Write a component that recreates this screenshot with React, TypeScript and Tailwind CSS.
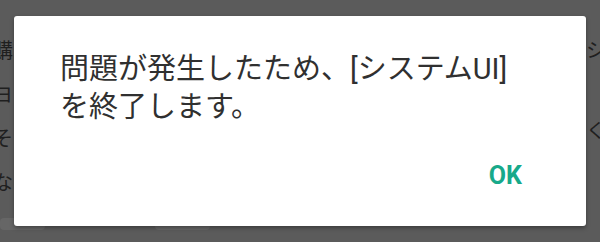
export default function App() {
  const leftChars = ['購', 'ヨ', 'そ', 'な'];
  return (
    <div className="relative w-[600px] h-[242px] overflow-hidden bg-[#5b5b5b] font-['Roboto','Noto_Sans_CJK_JP',sans-serif]">
      {/* page behind the scrim */}
      <div className="flex justify-between">
        <div className="flex flex-col gap-[14px] pt-[36px] -ml-[7px] text-[20px] leading-[30px] text-[#1f1f1f]">
          {leftChars.map((c) => (
            <div key={c}>{c}</div>
          ))}
        </div>
        <div className="flex flex-col gap-[50px] pt-[36px] text-[20px] leading-[30px] text-[#1f1f1f]">
          <div className="w-[14px] overflow-hidden">シ</div>
          <div className="w-[14px] overflow-hidden">く</div>
        </div>
      </div>
      <div className="flex gap-[110px] mt-[20px]">
        <div className="w-[45px] h-[12px] rounded-[4px] bg-[#666]" />
        <div className="w-[55px] h-[12px] rounded-[4px] bg-[#666]" />
      </div>

      {/* dialog */}
      <div className="absolute left-[14px] top-[16px] w-[572px] h-[210px] bg-white rounded-[3px] shadow-[0_2px_4px_rgba(0,0,0,0.35)] flex flex-col">
        <p className="pt-[34px] pl-[46px] pr-[20px] text-[29px] leading-[38px] text-[#303030]">
          問題が発生したため、[システムUI]
          <br />
          を終了します。
        </p>
        <div className="flex justify-end mt-auto pr-[64px] pb-[38px]">
          <span className="font-bold text-[25px] leading-[25px] text-[#17a98a]">OK</span>
        </div>
      </div>
    </div>
  );
}
